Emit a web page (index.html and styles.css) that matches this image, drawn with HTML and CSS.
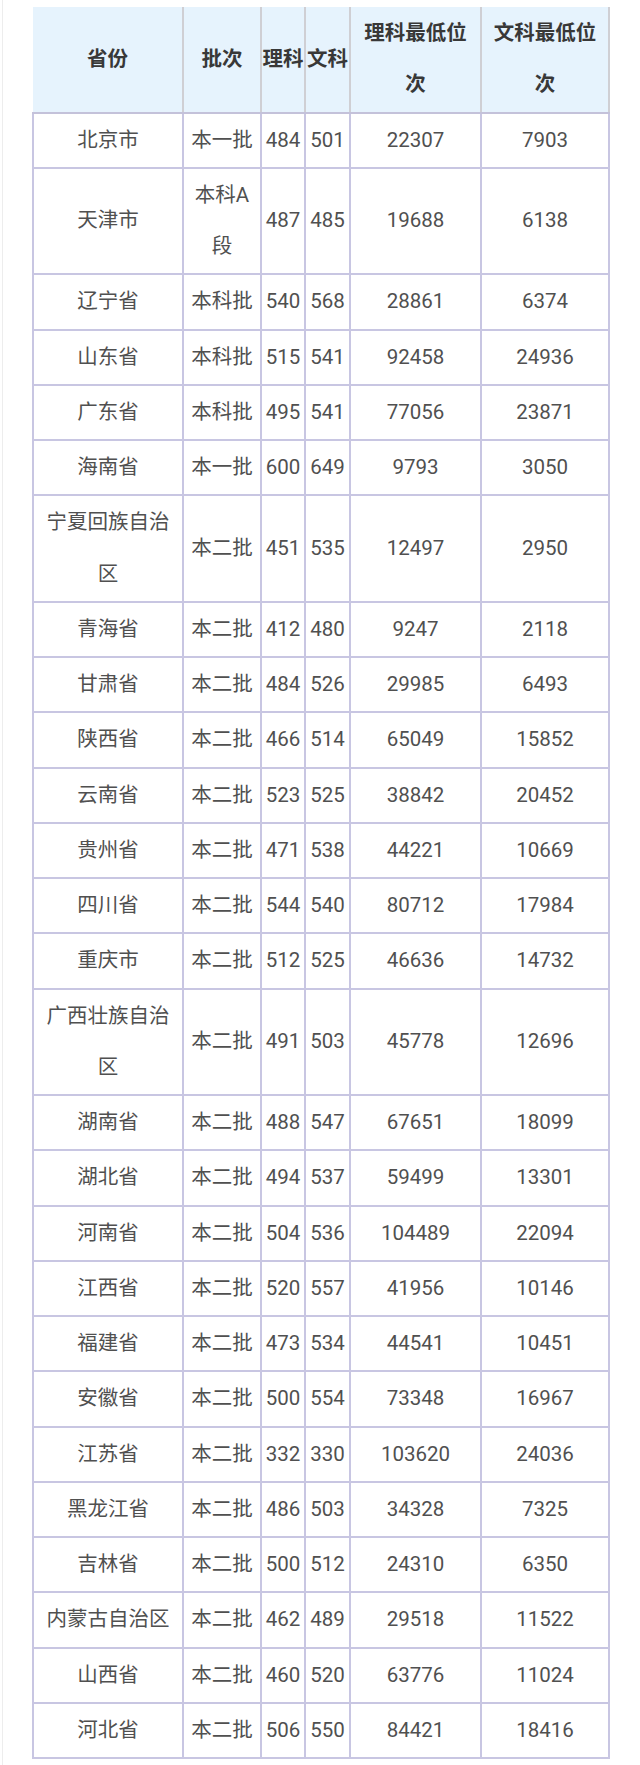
FILE: index.html
```html
<!DOCTYPE html>
<html lang="zh-CN">
<head>
<meta charset="utf-8">
<title>各省录取分数线</title>
<link rel="stylesheet" href="styles.css">
</head>
<body>
<div class="page">
<table class="scores">
<colgroup>
<col class="c-prov"><col class="c-batch"><col class="c-li"><col class="c-wen"><col class="c-lirank"><col class="c-wenrank">
</colgroup>
<thead>
<tr><th>省份</th><th>批次</th><th>理科</th><th>文科</th><th>理科最低位次</th><th>文科最低位次</th></tr>
</thead>
<tbody>
<tr><td>北京市</td><td>本一批</td><td>484</td><td>501</td><td>22307</td><td>7903</td></tr>
<tr><td>天津市</td><td>本科A段</td><td>487</td><td>485</td><td>19688</td><td>6138</td></tr>
<tr><td>辽宁省</td><td>本科批</td><td>540</td><td>568</td><td>28861</td><td>6374</td></tr>
<tr><td>山东省</td><td>本科批</td><td>515</td><td>541</td><td>92458</td><td>24936</td></tr>
<tr><td>广东省</td><td>本科批</td><td>495</td><td>541</td><td>77056</td><td>23871</td></tr>
<tr><td>海南省</td><td>本一批</td><td>600</td><td>649</td><td>9793</td><td>3050</td></tr>
<tr><td>宁夏回族自治区</td><td>本二批</td><td>451</td><td>535</td><td>12497</td><td>2950</td></tr>
<tr><td>青海省</td><td>本二批</td><td>412</td><td>480</td><td>9247</td><td>2118</td></tr>
<tr><td>甘肃省</td><td>本二批</td><td>484</td><td>526</td><td>29985</td><td>6493</td></tr>
<tr><td>陕西省</td><td>本二批</td><td>466</td><td>514</td><td>65049</td><td>15852</td></tr>
<tr><td>云南省</td><td>本二批</td><td>523</td><td>525</td><td>38842</td><td>20452</td></tr>
<tr><td>贵州省</td><td>本二批</td><td>471</td><td>538</td><td>44221</td><td>10669</td></tr>
<tr><td>四川省</td><td>本二批</td><td>544</td><td>540</td><td>80712</td><td>17984</td></tr>
<tr><td>重庆市</td><td>本二批</td><td>512</td><td>525</td><td>46636</td><td>14732</td></tr>
<tr><td>广西壮族自治区</td><td>本二批</td><td>491</td><td>503</td><td>45778</td><td>12696</td></tr>
<tr><td>湖南省</td><td>本二批</td><td>488</td><td>547</td><td>67651</td><td>18099</td></tr>
<tr><td>湖北省</td><td>本二批</td><td>494</td><td>537</td><td>59499</td><td>13301</td></tr>
<tr><td>河南省</td><td>本二批</td><td>504</td><td>536</td><td>104489</td><td>22094</td></tr>
<tr><td>江西省</td><td>本二批</td><td>520</td><td>557</td><td>41956</td><td>10146</td></tr>
<tr><td>福建省</td><td>本二批</td><td>473</td><td>534</td><td>44541</td><td>10451</td></tr>
<tr><td>安徽省</td><td>本二批</td><td>500</td><td>554</td><td>73348</td><td>16967</td></tr>
<tr><td>江苏省</td><td>本二批</td><td>332</td><td>330</td><td>103620</td><td>24036</td></tr>
<tr><td>黑龙江省</td><td>本二批</td><td>486</td><td>503</td><td>34328</td><td>7325</td></tr>
<tr><td>吉林省</td><td>本二批</td><td>500</td><td>512</td><td>24310</td><td>6350</td></tr>
<tr><td>内蒙古自治区</td><td>本二批</td><td>462</td><td>489</td><td>29518</td><td>11522</td></tr>
<tr><td>山西省</td><td>本二批</td><td>460</td><td>520</td><td>63776</td><td>11024</td></tr>
<tr><td>河北省</td><td>本二批</td><td>506</td><td>550</td><td>84421</td><td>18416</td></tr>
</tbody>
</table>
</div>
</body>
</html>
```
FILE: styles.css
```css
html, body {
  margin: 0;
  padding: 0;
  background: #ffffff;
}

.page {
  margin-left: 2px;
  border-left: 1px solid #ededed;
  min-height: 1765px;
  box-sizing: border-box;
  padding: 7px 0 0 29px;
}

.scores {
  border-collapse: collapse;
  table-layout: fixed;
  width: 576px;
  font-family: Roboto, "Noto Sans CJK SC", sans-serif;
  font-size: 20.5px;
  line-height: 51.25px;
  color: #505050;
}

.c-prov { width: 150px; }
.c-batch { width: 78px; }
.c-li { width: 44px; }
.c-wen { width: 45px; }
.c-lirank { width: 131px; }
.c-wenrank { width: 128px; }

.scores th,
.scores td {
  text-align: center;
  vertical-align: middle;
  padding: 1px 6px;
}

.scores th:nth-child(3),
.scores th:nth-child(4),
.scores td:nth-child(3),
.scores td:nth-child(4) {
  padding-left: 0;
  padding-right: 0;
}

.scores th {
  background: #e6f3fd;
  color: #383838;
  font-weight: bold;
  border-left: 2px solid #cfcfd4;
  border-right: 2px solid #cfcfd4;
  border-top: none;
  border-bottom: 2px solid #c4c2da;
}

.scores th:first-child {
  border-left: none;
}

.scores td {
  border: 2px solid #c8c6e2;
}
```
